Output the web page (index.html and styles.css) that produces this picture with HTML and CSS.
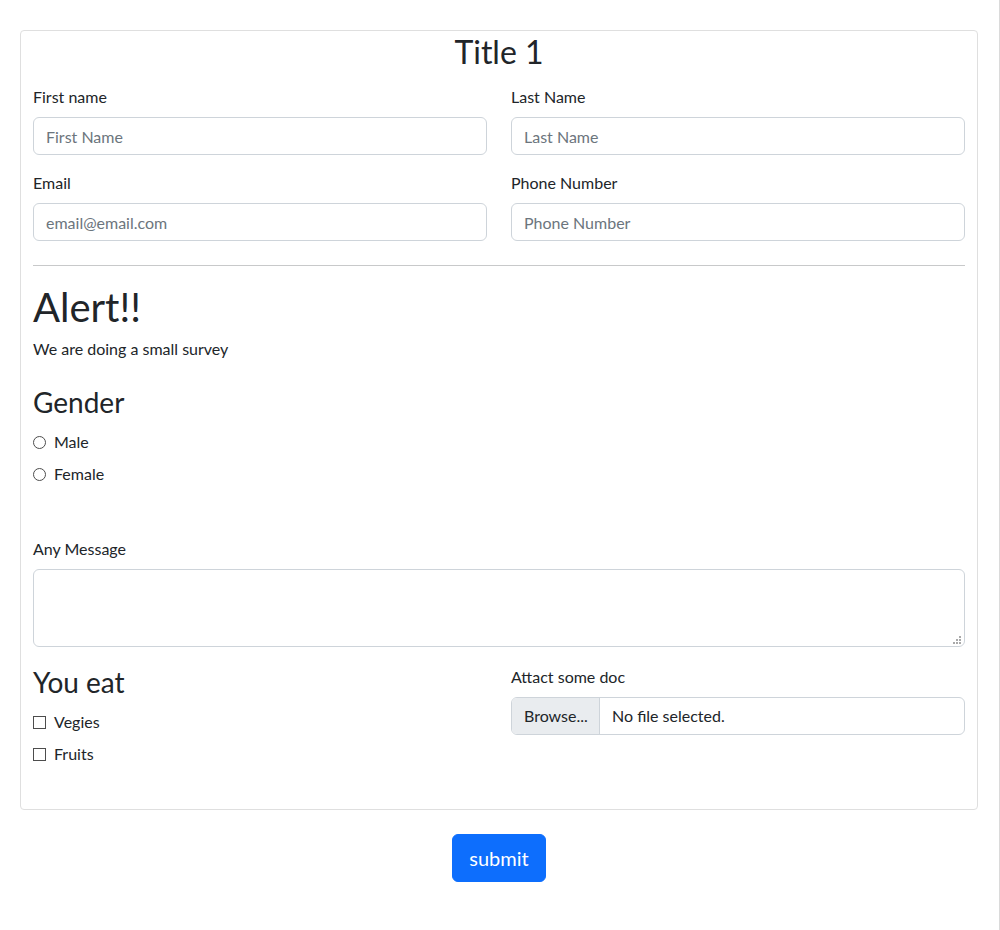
FILE: index.html
```html
<!DOCTYPE html>
<html lang="en">
<head>
<meta charset="utf-8">
<title>Form</title>
<link rel="stylesheet" href="styles.css">
</head>
<body>
<div class="page">
  <form class="card">
    <h2 class="title">Title 1</h2>
    <div class="grid2">
      <div class="field">
        <label class="label">First name</label>
        <input class="control" type="text" placeholder="First Name">
      </div>
      <div class="field">
        <label class="label">Last Name</label>
        <input class="control" type="text" placeholder="Last Name">
      </div>
      <div class="field">
        <label class="label">Email</label>
        <input class="control" type="text" placeholder="email@email.com">
      </div>
      <div class="field">
        <label class="label">Phone Number</label>
        <input class="control" type="text" placeholder="Phone Number">
      </div>
    </div>
    <hr class="rule">
    <h1 class="alert-title">Alert!!</h1>
    <p class="lead-text">We are doing a small survey</p>
    <h3 class="section-title">Gender</h3>
    <div class="choices">
      <label class="choice"><input type="radio" name="g" class="radio"><span>Male</span></label>
      <label class="choice"><input type="radio" name="g" class="radio"><span>Female</span></label>
    </div>
    <div class="message">
      <label class="label">Any Message</label>
      <div class="area-wrap">
        <textarea class="control area"></textarea>
        <svg class="grip" width="8" height="8" viewBox="0 0 8 8"><rect x="6" y="0" width="2" height="2"/><rect x="3" y="3" width="2" height="2"/><rect x="6" y="3" width="2" height="2"/><rect x="0" y="6" width="2" height="2"/><rect x="3" y="6" width="2" height="2"/><rect x="6" y="6" width="2" height="2"/></svg>
      </div>
    </div>
    <div class="grid2 bottom">
      <div>
        <h3 class="section-title eat">You eat</h3>
        <div class="choices">
          <label class="choice"><input type="checkbox" class="check"><span>Vegies</span></label>
          <label class="choice"><input type="checkbox" class="check"><span>Fruits</span></label>
        </div>
      </div>
      <div class="field">
        <label class="label">Attact some doc</label>
        <div class="file">
          <span class="file-btn">Browse...</span>
          <span class="file-name">No file selected.</span>
        </div>
      </div>
    </div>
  </form>
  <div class="actions">
    <button class="submit" type="button">submit</button>
  </div>
</div>
</body>
</html>
```
FILE: styles.css
```css
* { box-sizing: border-box; }
html, body { margin: 0; padding: 0; background: #fff; }
body {
  font-family: "Segoe UI", Lato, "Noto Sans", "Liberation Sans", sans-serif;
  font-size: 16px;
  line-height: 24px;
  color: #212529;
}
body::after {
  content: "";
  position: fixed;
  top: 0;
  bottom: 0;
  right: 0;
  width: 1px;
  background: #dadada;
}
.page {
  padding: 30px 0 0 20px;
  width: 978px;
}
.card {
  border: 1px solid #dfdfdf;
  border-radius: 4px;
  padding: 0 12px 43px;
}
.title {
  margin: 2px 0 14px;
  font-size: 32px;
  line-height: 38px;
  font-weight: 400;
  text-align: center;
}
.grid2 {
  display: grid;
  grid-template-columns: 1fr 1fr;
  column-gap: 24px;
  row-gap: 16px;
}
.field { display: flex; flex-direction: column; }
.label { display: block; margin-bottom: 8px; line-height: 24px; }
.control {
  display: block;
  width: 100%;
  height: 38px;
  padding: 6px 12px;
  font: inherit;
  color: #212529;
  border: 1px solid #ced4da;
  border-radius: 6px;
  background: #fff;
  outline: none;
}
.control::placeholder { color: #6c757d; }
.rule {
  margin: 24px 0 0;
  border: 0;
  border-top: 1px solid #c8c9ca;
  height: 0;
}
.alert-title {
  margin: 17px 0 0;
  font-size: 40px;
  line-height: 48px;
  font-weight: 400;
}
.lead-text { margin: 6px 0 0; }
.section-title {
  margin: 24px 0 0;
  font-size: 28px;
  line-height: 34px;
  font-weight: 400;
}
.choices {
  display: flex;
  flex-direction: column;
  gap: 8px;
  margin-top: 11px;
}
.choice { display: flex; align-items: center; gap: 8px; line-height: 24px; }
.radio, .check {
  appearance: none;
  -webkit-appearance: none;
  margin: 0;
  width: 13px;
  height: 13px;
  border: 1px solid #4d4d4d;
  background: #fff;
  flex: none;
}
.radio { border-radius: 50%; }
.check { border-radius: 0; }
.message { margin-top: 51px; }
.area-wrap { position: relative; }
.area { height: 78px; resize: none; }
.grip {
  position: absolute;
  right: 4px;
  bottom: 3px;
  fill: #a9a9a9;
}
.bottom { margin-top: 18px; }
.eat { margin-top: 0; }
.file {
  display: flex;
  height: 38px;
  border: 1px solid #ced4da;
  border-radius: 6px;
  overflow: hidden;
}
.file-btn {
  padding: 6px 12px;
  background: #e9ecef;
  border-right: 1px solid #ced4da;
  width: 88px;
}
.file-name { padding: 6px 12px; }
.actions {
  display: flex;
  justify-content: center;
  margin-top: 24px;
}
.submit {
  font: inherit;
  font-size: 20px;
  line-height: 30px;
  padding: 8px 16px;
  height: 48px;
  color: #fff;
  background: #0d6efd;
  border: 1px solid #0d6efd;
  border-radius: 6px;
}
```
